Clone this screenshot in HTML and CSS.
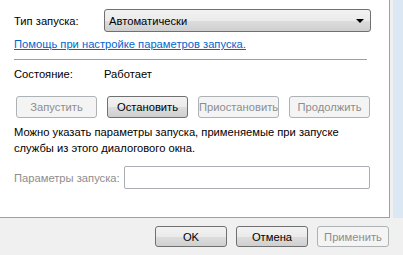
FILE: index.html
```html
<!DOCTYPE html>
<html lang="ru">
<head>
  <meta charset="UTF-8" />
  <title>Свойства службы</title>
  <link rel="stylesheet" href="styles.css">
</head>
<body>
  <div class="window">
    <div class="tab-area">
      <div class="panel">
        <div class="row startup">
          <span class="label">Тип запуска:</span>
          <div class="select">
            <span>Автоматически</span>
            <span class="arrow"></span>
          </div>
        </div>

        <a class="help-link" href="#">Помощь при настройке параметров запуска.</a>

        <div class="separator"></div>

        <div class="row status">
          <span class="label">Состояние:</span>
          <span>Работает</span>
        </div>

        <div class="service-buttons">
          <button class="btn" disabled>Запустить</button>
          <button class="btn">Остановить</button>
          <button class="btn" disabled>Приостановить</button>
          <button class="btn" disabled>Продолжить</button>
        </div>

        <p class="hint">Можно указать параметры запуска, применяемые при запуске службы из этого диалогового окна.</p>

        <div class="row params">
          <span class="label muted">Параметры запуска:</span>
          <div class="input"></div>
        </div>
      </div>
      <div class="edge"></div>
    </div>

    <div class="footer">
      <button class="btn">OK</button>
      <button class="btn">Отмена</button>
      <button class="btn" disabled>Применить</button>
    </div>
  </div>
</body>
</html>
```

FILE: styles.css
```css
body {
  margin: 0;
  padding: 0;
  background-color: #f0f0f0;
  font-family: 'Liberation Sans', Arial, sans-serif;
  font-size: 11.2px;
  color: #000;
}

.window {
  width: 403px;
  height: 255px;
  overflow: hidden;
}

.tab-area {
  display: flex;
  height: 218px;
}

.panel {
  width: 375px;
  height: 217px;
  padding-left: 14px;
  background: #fff;
  border-right: 1px solid #a0a0a0;
  border-bottom: 1px solid #a0a0a0;
}

.edge {
  flex: 1;
  border-left: 3px solid #f0f0f0;
  background: #dce7f4;
}

.row {
  display: flex;
  align-items: center;
  white-space: nowrap;
}

.label {
  width: 90px;
}

.startup {
  margin-top: 9px;
  height: 23px;
}

.select {
  box-sizing: border-box;
  width: 267px;
  height: 23px;
  display: flex;
  align-items: center;
  justify-content: space-between;
  padding: 0 6px 0 4px;
  border: 1px solid #707070;
  border-radius: 3px;
  background: linear-gradient(#f2f2f2 0%, #ebebeb 50%, #dddddd 51%, #cfcfcf 100%);
}

.arrow {
  width: 0;
  height: 0;
  border-left: 4px solid transparent;
  border-right: 4px solid transparent;
  border-top: 4px solid #000;
}

.help-link {
  display: inline-block;
  margin-top: 5px;
  color: #0066cc;
  text-decoration: underline;
  line-height: 15px;
}

.separator {
  width: 353px;
  height: 1px;
  margin-top: 7px;
  background: #a0a0a0;
}

.status {
  margin-top: 6px;
  height: 15px;
}

.service-buttons {
  display: flex;
  gap: 10px;
  margin-top: 15px;
  padding-left: 2px;
}

.btn {
  box-sizing: border-box;
  width: 81px;
  height: 22px;
  padding: 0;
  font-family: inherit;
  font-size: 11.2px;
  color: #000;
  border: 1px solid #707070;
  border-radius: 3px;
  background: linear-gradient(#f2f2f2 0%, #ebebeb 50%, #dddddd 51%, #cfcfcf 100%);
}

.btn:disabled {
  color: #8d8d8d;
  border-color: #adb2b5;
  background: #f4f4f4;
}

.hint {
  margin: 6px 0 0;
  width: 360px;
  line-height: 16px;
}

.params {
  margin-top: 10px;
  height: 23px;
}

.params .label {
  width: 110px;
}

.muted {
  color: #8d8d8d;
}

.input {
  box-sizing: border-box;
  width: 246px;
  height: 23px;
  border: 1px solid #abadb3;
  border-radius: 2px;
  background: #fff;
}

.footer {
  display: flex;
  justify-content: flex-end;
  gap: 9px;
  padding: 8px 14px 0 0;
}

.footer .btn {
  width: 72px;
  height: 21px;
}
```
